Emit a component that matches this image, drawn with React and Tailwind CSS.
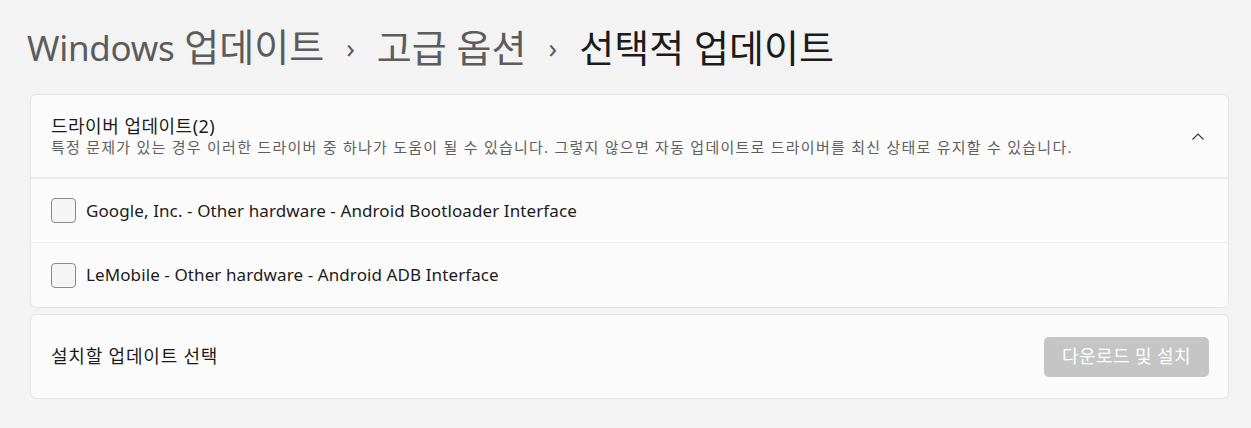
export default function App() {
  const font = { fontFamily: '"Noto Sans", "Noto Sans CJK KR", sans-serif' };
  return (
    <div className="min-h-[428px] bg-[#f3f3f3] pl-[30px] pr-[22px] pt-[22px]" style={font}>
      <h1 className="-ml-[3px] flex items-center text-[38px] leading-[48px] font-normal">
        <span className="text-[#5c5c5c]"><span className="text-[35px] tracking-[-0.3px]">Windows</span> 업데이트</span>
        <span className="mx-[22px] text-[#5c5c5c] text-[28px]">›</span>
        <span className="text-[#5c5c5c]">고급 옵션</span>
        <span className="mx-[22px] text-[#5c5c5c] text-[28px]">›</span>
        <span className="text-[#1b1b1b]">선택적 업데이트</span>
      </h1>

      <div className="mt-[22px] rounded-[6px] border border-[#e5e5e5] bg-[#fbfbfb]">
        <div className="flex items-center justify-between h-[84px] pl-[20px] pr-[22px] border-b-2 border-[#ebebeb]">
          <div className="flex flex-col">
            <div className="text-[18px] leading-[22px] tracking-[0.5px] text-[#1b1b1b]">드라이버 업데이트(2)</div>
            <div className="text-[15px] leading-[20px] tracking-[1.25px] text-[#5f5f5f]">
              특정 문제가 있는 경우 이러한 드라이버 중 하나가 도움이 될 수 있습니다. 그렇지 않으면 자동 업데이트로 드라이버를 최신 상태로 유지할 수 있습니다.
            </div>
          </div>
          <svg width="16" height="16" viewBox="0 0 16 16" className="mt-[2px]">
            <path d="M2.5 10.5 L8 5 L13.5 10.5" fill="none" stroke="#333" strokeWidth="1.1" />
          </svg>
        </div>
        {["Google, Inc. - Other hardware - Android Bootloader Interface", "LeMobile - Other hardware - Android ADB Interface"].map((t, i) => (
          <div key={t} className={`flex items-center h-[64px] pl-[20px] ${i === 0 ? "border-b border-[#f0f0f0]" : ""}`}>
            <div className="w-[25px] h-[25px] rounded-[4px] border border-[#8a8a8a] bg-[#f5f5f5]" />
            <span className="ml-[10px] text-[17px] tracking-[0.1px] text-[#1b1b1b]">{t}</span>
          </div>
        ))}
      </div>

      <div className="mt-[6px] flex items-center justify-between h-[85px] rounded-[6px] border border-[#e5e5e5] bg-[#fbfbfb] pl-[20px] pr-[19px]">
        <span className="text-[18px] tracking-[0.8px] text-[#1b1b1b]">설치할 업데이트 선택</span>
        <button className="h-[40px] w-[165px] rounded-[5px] bg-[#c5c5c5] text-[18px] tracking-[0.4px] text-white">다운로드 및 설치</button>
      </div>
    </div>
  );
}
